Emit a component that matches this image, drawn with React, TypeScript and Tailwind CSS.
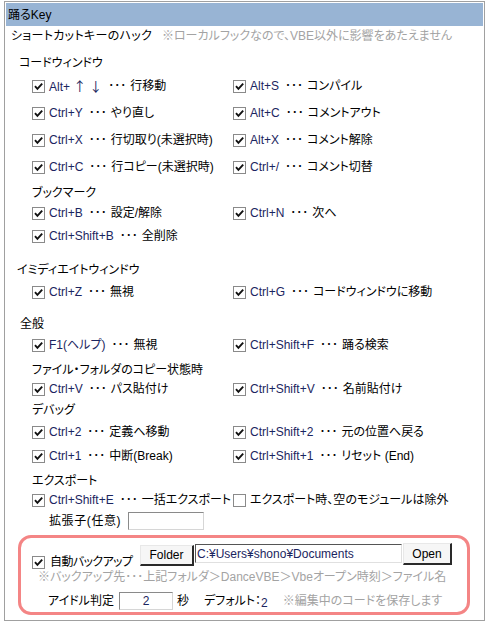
const font = "font-['Liberation_Sans','Noto_Sans_CJK_JP',sans-serif] [font-feature-settings:'palt']";

function Check({ on = true }: { on?: boolean }) {
  return (
    <svg width="13" height="13" viewBox="0 0 13 13" className="shrink-0">
      <rect x="0.5" y="0.5" width="12" height="12" fill="#fff" stroke="#8a8a8a" />
      {on && (
        <path d="M3 6.2 L5.4 8.8 L10.2 3.6" fill="none" stroke="#111" strokeWidth="1.9" />
      )}
    </svg>
  );
}

function Item({ k, desc, on = true }: { k?: React.ReactNode; desc: string; on?: boolean }) {
  return (
    <div className="flex items-center">
      <Check on={on} />
      <span className="ml-[4px] flex items-center whitespace-nowrap">
        {k && <span className="text-[#1b2560]">{k}</span>}
        {k && <span className="ml-[6px] mr-[4px]">･･･</span>}
        <span className="text-black">{desc}</span>
      </span>
    </div>
  );
}

function Row({
  mt,
  left,
  right,
}: {
  mt: string;
  left: React.ReactNode;
  right?: React.ReactNode;
}) {
  return (
    <div className={`flex h-[18px] items-center pl-[27px] ${mt}`}>
      <div className="w-[201px]">{left}</div>
      {right && <div>{right}</div>}
    </div>
  );
}

function Head({ mt, ml, text }: { mt: string; ml: string; text: string }) {
  return (
    <div className={`flex h-[18px] items-center whitespace-nowrap ${mt} ${ml}`}>{text}</div>
  );
}

const arrows = (
  <>
    Alt+ <span className="font-['Noto_Sans_CJK_JP'] [font-feature-settings:'palt'] text-[13px]">↑ ↓</span>
  </>
);

export default function App() {
  return (
    <div className={`h-[624px] w-[491px] bg-white pl-[4px] pt-[1px] text-[12px] text-black ${font}`}>
      <div className="flex h-[620px] w-[481px] flex-col border border-[#a0a0a0]">
        <div className="mx-px mt-px flex h-[23px] items-center bg-[#98b4d4] px-[2px]">踊るKey</div>

        <div className="mt-px flex h-[18px] items-center pl-[6px] whitespace-nowrap">
          <span className="w-[151px] tracking-[0.3px]">ショートカットキーのハック</span>
          <span className="text-[#a3a3a3]">※ローカルフックなので、VBE以外に影響をあたえません</span>
        </div>

        <Head mt="mt-[9px]" ml="ml-[14px]" text="コードウィンドウ" />
        <Row mt="mt-[5px]" left={<Item k={arrows} desc="行移動" />} right={<Item k="Alt+S" desc="コンパイル" />} />
        <Row mt="mt-[9px]" left={<Item k="Ctrl+Y" desc="やり直し" />} right={<Item k="Alt+C" desc="コメントアウト" />} />
        <Row mt="mt-[9px]" left={<Item k="Ctrl+X" desc="行切取り(未選択時)" />} right={<Item k="Alt+X" desc="コメント解除" />} />
        <Row mt="mt-[9px]" left={<Item k="Ctrl+C" desc="行コピー(未選択時)" />} right={<Item k="Ctrl+/" desc="コメント切替" />} />

        <Head mt="mt-[8px]" ml="ml-[27px]" text="ブックマーク" />
        <Row mt="mt-[2px]" left={<Item k="Ctrl+B" desc="設定/解除" />} right={<Item k="Ctrl+N" desc="次へ" />} />
        <Row mt="mt-[5px]" left={<Item k="Ctrl+Shift+B" desc="全削除" />} />

        <Head mt="mt-[16px]" ml="ml-[12px]" text="イミディエイトウィンドウ" />
        <Row mt="mt-[4px]" left={<Item k="Ctrl+Z" desc="無視" />} right={<Item k="Ctrl+G" desc="コードウィンドウに移動" />} />

        <Head mt="mt-[14px]" ml="ml-[15px]" text="全般" />
        <Row mt="mt-[3px]" left={<Item k="F1(ヘルプ)" desc="無視" />} right={<Item k="Ctrl+Shift+F" desc="踊る検索" />} />
        <Head mt="mt-[7px]" ml="ml-[27px]" text="ファイル・フォルダのコピー状態時" />
        <Row mt="mt-[1px]" left={<Item k="Ctrl+V" desc="パス貼付け" />} right={<Item k="Ctrl+Shift+V" desc="名前貼付け" />} />

        <Head mt="mt-[3px]" ml="ml-[27px]" text="デバッグ" />
        <Row mt="mt-[4px]" left={<Item k="Ctrl+2" desc="定義へ移動" />} right={<Item k="Ctrl+Shift+2" desc="元の位置へ戻る" />} />
        <Row mt="mt-[6px]" left={<Item k="Ctrl+1" desc="中断(Break)" />} right={<Item k="Ctrl+Shift+1" desc="リセット (End)" />} />

        <Head mt="mt-[7px]" ml="ml-[27px]" text="エクスポート" />
        <Row mt="mt-[1px]" left={<Item k="Ctrl+Shift+E" desc="一括エクスポート" />} right={<Item on={false} desc="エクスポート時、空のモジュールは除外" />} />
        <div className="mt-[3px] flex h-[18px] items-center pl-[44px]">
          <span className="w-[79px] whitespace-nowrap tracking-[0.6px]">拡張子(任意)</span>
          <div className="h-[18px] w-[76px] border border-t-[#8a8a8a] border-l-[#8a8a8a] border-b-[#d6d6d6] border-r-[#d6d6d6] bg-white" />
        </div>

        <div className="ml-[13px] mt-[5px] flex h-[80px] w-[452px] flex-col rounded-[13px] border-[3px] border-[#f48585] pl-[11px] pt-[5px]">
          <div className="flex h-[23px] items-start">
            <div className="mt-[10px] flex items-center">
              <Check />
              <span className="ml-[5px] w-[90px] whitespace-nowrap tracking-[-0.6px]">自動バックアップ</span>
            </div>
            <button className="mt-[2px] h-[21px] w-[54px] border-t border-l border-r-2 border-b-2 border-t-[#e8e8e8] border-l-[#e8e8e8] border-r-[#2a2a2a] border-b-[#2a2a2a] bg-[#f6f6f6] text-[12px] text-black">
              Folder
            </button>
            <div className="ml-px mt-px flex h-[19px] w-[207px] items-center border border-t-[#555] border-l-[#555] border-b-[#e0e0e0] border-r-[#e0e0e0] bg-white pl-[1px] text-[#1b2560]">
              C:¥Users¥shono¥Documents
            </div>
            <button className="ml-px h-[22px] w-[49px] border-t border-l border-r-2 border-b-2 border-t-[#e8e8e8] border-l-[#e8e8e8] border-r-[#2a2a2a] border-b-[#2a2a2a] bg-[#f6f6f6] text-[12px] text-black">
              Open
            </button>
          </div>
          <div className="ml-[6px] mt-[2px] flex h-[18px] items-center whitespace-nowrap text-[#a3a3a3]">
            ※バックアップ先･･･上記フォルダ＞DanceVBE＞Vbeオープン時刻＞ファイル名
          </div>
          <div className="mt-[6px] flex h-[18px] items-center whitespace-nowrap pl-[16px]">
            <span className="w-[71px]">アイドル判定</span>
            <div className="flex h-[18px] w-[54px] items-center justify-center border border-t-[#8a8a8a] border-l-[#8a8a8a] border-b-[#d6d6d6] border-r-[#d6d6d6] bg-white text-[#1b2560]">
              2
            </div>
            <span className="ml-[4px] w-[27px]">秒</span>
            <span>デフォルト：</span>
            <span className="mt-[3px] text-[#1b2560]">2</span>
            <span className="ml-[15px] text-[#a3a3a3]">※編集中のコードを保存します</span>
          </div>
        </div>
      </div>
    </div>
  );
}
